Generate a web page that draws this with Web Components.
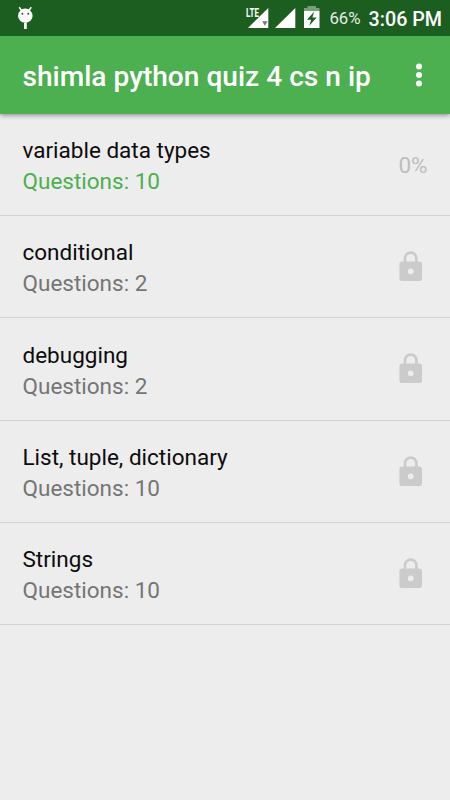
<!DOCTYPE html>
<html lang="en">
<head>
<meta charset="UTF-8">
<meta name="viewport" content="width=device-width, initial-scale=1.0">
<title>shimla python quiz 4 cs n ip</title>
<style>
  body {
    margin: 0;
    background: #ededed;
    font-family: Roboto, sans-serif;
    --green: #4caf50;
    --dark-green: #1b5e20;
  }
</style>
</head>
<body>
<quiz-app>
  <status-bar slot="status" battery="66%" time="3:06 PM"></status-bar>
  <app-bar slot="bar">shimla python quiz 4 cs n ip</app-bar>
  <quiz-item questions="10" progress="0%">variable data types</quiz-item>
  <quiz-item questions="2">conditional</quiz-item>
  <quiz-item questions="2">debugging</quiz-item>
  <quiz-item questions="10">List, tuple, dictionary</quiz-item>
  <quiz-item questions="10">Strings</quiz-item>
</quiz-app>

<script>
class QuizApp extends HTMLElement {
  constructor() {
    super();
    this.attachShadow({ mode: "open" });
    this.shadowRoot.innerHTML = `
    <style>
      :host {
        display: flex;
        flex-direction: column;
        height: 800px;
        overflow: hidden;
      }
    </style>
    <slot name="status"></slot>
    <slot name="bar"></slot>
    <main><slot></slot></main>
    `;
  }
}

class StatusBar extends HTMLElement {
  constructor() {
    super();
    this.attachShadow({ mode: "open" });
    this.shadowRoot.innerHTML = `
    <style>
      :host {
        display: flex;
        align-items: center;
        box-sizing: border-box;
        height: 35.5px;
        padding: 0 8px 0 17px;
        background: var(--dark-green);
        color: #fff;
        z-index: 2;
      }

      svg {
        display: block;
        flex: none;
      }

      .signal {
        margin-left: auto;
      }

      .bars {
        margin-left: 6px;
      }

      .power {
        margin-left: 7.5px;
      }

      .battery {
        margin-left: 9.5px;
        padding-top: 1px;
        font-size: 16.8px;
        color: #e4ece4;
      }

      .time {
        margin-left: 8px;
        padding-top: 3px;
        font-size: 19.7px;
        font-weight: 500;
      }
    </style>
    <svg class="robot" width="17" height="36" viewBox="0 0 17 36" fill="#fff">
      <path d="M2.2 7.2 5 11M14.3 7.2 11.5 11" stroke="#fff" stroke-width="1.5"/>
      <ellipse cx="8.3" cy="15.7" rx="7.3" ry="7.1"/>
      <rect x="7" y="22.5" width="2.8" height="6.5" rx=".6"/>
      <circle cx="5.4" cy="13.8" r="1" fill="#1b5e20"/>
      <circle cx="11.2" cy="13.8" r="1" fill="#1b5e20"/>
    </svg>
    <svg class="signal" width="23" height="36" viewBox="0 0 23 36">
      <path d="M2 28 22.3 8v20z" fill="#fff"/>
      <path d="M0 6h13.2v11.2H0z" fill="#1b5e20"/>
      <path d="M16.2 21.2h5.4L18.9 25.8z" fill="#777"/>
      <text x="0" y="16.6" font-family="Roboto" font-size="12.5" font-weight="700" textLength="13" lengthAdjust="spacingAndGlyphs" fill="#fff">LTE</text>
    </svg>
    <svg class="bars" width="21" height="36" viewBox="0 0 21 36"><path d="M0 28 20.3 8v20z" fill="#fff"/></svg>
    <svg class="power" width="16" height="36" viewBox="0 0 16 36">
      <path d="M0 11V8h3.5V6h8.5v2h3.5v3z" fill="#76a079"/>
      <path d="M0 11h15.5v17H0z" fill="#fff"/>
      <path d="M10.3 11.6 3 19.8h4.2l-1.9 6L12.6 17.4H8.4z" fill="#1b5e20"/>
    </svg>
    <span class="battery"></span>
    <span class="time"></span>
    `;
  }

  connectedCallback() {
    this.shadowRoot.querySelector(".battery").textContent = this.getAttribute("battery");
    this.shadowRoot.querySelector(".time").textContent = this.getAttribute("time");
  }
}

class AppBar extends HTMLElement {
  constructor() {
    super();
    this.attachShadow({ mode: "open" });
    this.shadowRoot.innerHTML = `
    <style>
      :host {
        display: flex;
        align-items: center;
        justify-content: space-between;
        box-sizing: border-box;
        height: 78.5px;
        padding: 0 26px 0 22.5px;
        background: var(--green);
        color: #fff;
        font-size: 28.1px;
        font-weight: 500;
        white-space: nowrap;
        box-shadow: 0 1px 5px rgba(0, 0, 0, .45);
        z-index: 1;
      }

      span {
        padding-top: 3px;
      }

      svg {
        display: block;
      }
    </style>
    <span><slot></slot></span>
    <svg width="10" height="26" viewBox="0 0 10 26" fill="#fff">
      <circle cx="5" cy="4.6" r="3"/>
      <circle cx="5" cy="13" r="3"/>
      <circle cx="5" cy="21.4" r="3"/>
    </svg>
    `;
  }
}

class QuizItem extends HTMLElement {
  constructor() {
    super();
    this.attachShadow({ mode: "open" });
    this.shadowRoot.innerHTML = `
    <style>
      :host {
        display: flex;
        align-items: center;
        justify-content: space-between;
        box-sizing: border-box;
        height: 102.2px;
        padding: 0 22.5px;
        border-bottom: 1px solid #d2d2d2;
        font-size: 22.5px;
        line-height: 31px;
        color: #0c0c0c;
      }

      .text {
        padding-top: 3.2px;
      }

      .questions {
        color: #757575;
      }

      :host([progress]) .questions {
        color: var(--green);
      }

      .state {
        color: #bdbdbd;
      }

      :host([progress]) .state {
        padding-top: 2.6px;
      }

      svg {
        display: block;
        margin-right: 5px;
      }
    </style>
    <div class="text">
      <div><slot></slot></div>
      <div class="questions"></div>
    </div>
    <div class="state">
      <svg width="24" height="31" viewBox="0 0 24 31">
        <path d="M6 12V7.3a5.7 5.7 0 0 1 11.4 0V12" fill="none" stroke="#cbcbcb" stroke-width="2.6"/>
        <path fill="#cbcbcb" fill-rule="evenodd" d="M3.2 10.5h17a2.8 2.8 0 0 1 2.8 2.8v14a2.8 2.8 0 0 1-2.8 2.8h-17a2.8 2.8 0 0 1-2.8-2.8v-14a2.8 2.8 0 0 1 2.8-2.8zM11.7 17.4a2.9 2.9 0 1 0 0 5.8 2.9 2.9 0 0 0 0-5.8z"/>
      </svg>
    </div>
    `;
  }

  connectedCallback() {
    this.shadowRoot.querySelector(".questions").textContent = `Questions: ${this.getAttribute("questions")}`;
    // a started quiz shows its score, the others stay locked
    if (this.hasAttribute("progress")) {
      this.shadowRoot.querySelector(".state").textContent = this.getAttribute("progress");
    }
  }
}

customElements.define("quiz-app", QuizApp);
customElements.define("status-bar", StatusBar);
customElements.define("app-bar", AppBar);
customElements.define("quiz-item", QuizItem);
</script>
</body>
</html>
